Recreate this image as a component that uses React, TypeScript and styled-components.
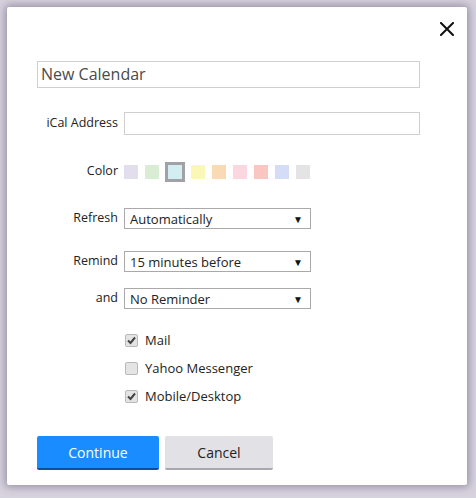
import React, { useState } from 'react';
import { createGlobalStyle, styled } from 'styled-components';

const GlobalStyle = createGlobalStyle`
    html, body {
        margin: 0;
        padding: 0;
        background: #d7d3de;
        font-family: "Open Sans", "Noto Sans", sans-serif;
    }
`;

const colors = ['#e3deed', '#d8edd4', '#d3eef0', '#fbf8b7', '#f8dab5', '#fbd7e0', '#f9c6c2', '#d4dcf7', '#e4e4e4'];

const checks = [
    { label: 'Mail', checked: true },
    { label: 'Yahoo Messenger', checked: false },
    { label: 'Mobile/Desktop', checked: true },
];

const App: React.FC = () => {
    const [selectedColor, setSelectedColor] = useState<number>(2);

    return (
        <>
            <GlobalStyle />
            <Page>
                <Modal>
                    <Header>
                        <CloseButton aria-label="Close">
                            <svg width="14" height="14" viewBox="0 0 14 14">
                                <path d="M1 1 L13 13 M13 1 L1 13" stroke="#111" strokeWidth="2" strokeLinecap="square" />
                            </svg>
                        </CloseButton>
                    </Header>
                    <NameInput defaultValue="New Calendar" />
                    <Row $top={24}>
                        <Label>iCal Address</Label>
                        <TextInput />
                    </Row>
                    <Row $top={27}>
                        <Label>Color</Label>
                        <Swatches>
                            {colors.map((c, i) => (
                                <Swatch
                                    key={c}
                                    $color={c}
                                    $selected={i === selectedColor}
                                    onClick={() => setSelectedColor(i)}
                                />
                            ))}
                        </Swatches>
                    </Row>
                    <Row $top={26}>
                        <Label>Refresh</Label>
                        <SelectBox>
                            <span>Automatically</span>
                            <Arrow>▼</Arrow>
                        </SelectBox>
                    </Row>
                    <Row $top={22}>
                        <Label>Remind</Label>
                        <SelectBox>
                            <span>15 minutes before</span>
                            <Arrow>▼</Arrow>
                        </SelectBox>
                    </Row>
                    <Row $top={16}>
                        <Label>and</Label>
                        <SelectBox>
                            <span>No Reminder</span>
                            <Arrow>▼</Arrow>
                        </SelectBox>
                    </Row>
                    <Checks>
                        {checks.map((c) => (
                            <CheckRow key={c.label}>
                                <CheckBox>
                                    {c.checked && (
                                        <svg width="11" height="11" viewBox="0 0 11 11">
                                            <path d="M2 5.5 L4.5 8 L9 2.5" stroke="#444" strokeWidth="2" fill="none" />
                                        </svg>
                                    )}
                                </CheckBox>
                                <CheckLabel>{c.label}</CheckLabel>
                            </CheckRow>
                        ))}
                    </Checks>
                    <Buttons>
                        <PrimaryButton>Continue</PrimaryButton>
                        <SecondaryButton>Cancel</SecondaryButton>
                    </Buttons>
                </Modal>
            </Page>
        </>
    );
};

export default App;

const Page = styled.div`
    padding: 7px;
    width: 476px;
    height: 498px;
    box-sizing: border-box;
`;

const Modal = styled.div`
    width: 460px;
    height: 478px;
    box-sizing: border-box;
    background: #fff;
    border-radius: 2px;
    box-shadow: 0 0 8px 2px rgba(70, 60, 90, 0.45);
    padding: 0 47px 0 30px;
    display: flex;
    flex-direction: column;
`;

const Header = styled.div`
    display: flex;
    justify-content: flex-end;
    height: 54px;
    margin-right: -34px;
    padding-top: 15px;
    box-sizing: border-box;
`;

const CloseButton = styled.button`
    width: 14px;
    height: 14px;
    padding: 0;
    border: none;
    background: none;
    display: flex;
    cursor: pointer;
`;

const NameInput = styled.input`
    width: 383px;
    height: 27px;
    box-sizing: border-box;
    border: 1px solid #cfcfcf;
    padding: 0 0 1px 3px;
    font-family: inherit;
    font-size: 16px;
    color: #4a4a4a;
    outline: none;
`;

const Row = styled.div<{ $top: number }>`
    display: flex;
    align-items: center;
    margin-top: ${(p) => p.$top}px;
`;

const Label = styled.label`
    width: 81px;
    margin-right: 6px;
    text-align: right;
    font-size: 12.5px;
    color: #222;
    line-height: 18px;
    margin-top: -2px;
`;

const TextInput = styled.input`
    width: 296px;
    height: 23px;
    box-sizing: border-box;
    border: 1px solid #cfcfcf;
    outline: none;
`;

const Swatches = styled.div`
    display: flex;
    align-items: center;
    gap: 7px;
`;

const Swatch = styled.div<{ $color: string; $selected: boolean }>`
    width: ${(p) => (p.$selected ? 20 : 14)}px;
    height: ${(p) => (p.$selected ? 20 : 14)}px;
    box-sizing: border-box;
    background: ${(p) => p.$color};
    border: ${(p) => (p.$selected ? '3px solid #a2a1a8' : 'none')};
    margin: ${(p) => (p.$selected ? '0 -1px' : '0')};
    cursor: pointer;
`;

const SelectBox = styled.div`
    width: 187px;
    height: 21px;
    box-sizing: border-box;
    border: 1px solid #a9a9a9;
    display: flex;
    align-items: center;
    justify-content: space-between;
    padding: 0 7px 0 5px;
    font-size: 13px;
    color: #222;
`;

const Arrow = styled.span`
    font-size: 10px;
    color: #111;
`;

const Checks = styled.div`
    display: flex;
    flex-direction: column;
    gap: 10px;
    margin-top: 22px;
    padding-left: 88px;
`;

const CheckRow = styled.div`
    display: flex;
    align-items: center;
    height: 18px;
`;

const CheckBox = styled.span`
    width: 13px;
    height: 13px;
    box-sizing: border-box;
    border: 1px solid #b9b9b9;
    background: #e4e4e4;
    border-radius: 2px;
    display: flex;
    align-items: center;
    justify-content: center;
    margin-right: 7px;
`;

const CheckLabel = styled.span`
    font-size: 13px;
    color: #222;
`;

const Buttons = styled.div`
    display: flex;
    gap: 6px;
    margin-top: 31px;
`;

const BaseButton = styled.button`
    height: 34px;
    box-sizing: border-box;
    border: none;
    border-radius: 2px;
    font-family: inherit;
    font-size: 14px;
    cursor: pointer;
`;

const PrimaryButton = styled(BaseButton)`
    width: 122px;
    background: #198cff;
    color: #fff;
    border-bottom: 2px solid #0a4fa6;
`;

const SecondaryButton = styled(BaseButton)`
    width: 108px;
    background: #e1e1e6;
    color: #222;
    border-bottom: 2px solid #a8a8b0;
`;
